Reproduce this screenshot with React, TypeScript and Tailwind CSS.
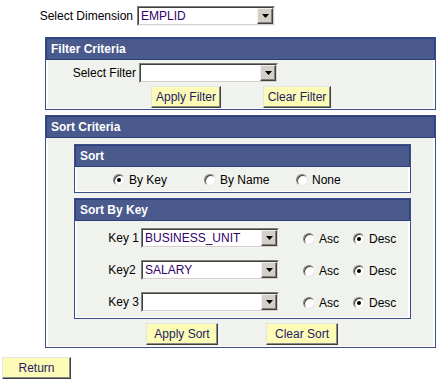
import React from 'react';

function Select({ value, w = 138 }: { value?: string; w?: number }) {
  return (
    <div
      className="h-[20px] flex border border-t-[#808080] border-l-[#808080] border-r-[#f4f4f4] border-b-[#f4f4f4]"
      style={{ width: w }}
    >
      <div className="flex-1 flex border border-t-[#404040] border-l-[#404040] border-r-[#d4d0c8] border-b-[#d4d0c8] bg-white">
        <span className="flex-1 pl-[2px] leading-[16px] text-[#33006b] overflow-hidden whitespace-nowrap">{value}</span>
        <span className="w-[16px] h-[16px] bg-[#d4d0c8] flex items-center justify-center border border-t-[#f0f0f0] border-l-[#f0f0f0] border-r-[#404040] border-b-[#404040] shadow-[inset_-1px_-1px_0_#808080]">
          <svg width="7" height="4" viewBox="0 0 7 4">
            <path d="M0 0h7L3.5 4z" fill="#000" />
          </svg>
        </span>
      </div>
    </div>
  );
}

function Button({ label, w }: { label: string; w: number }) {
  return (
    <div
      className="h-[22px] flex items-center justify-center bg-[#fcfcb6] text-[#241a66] border border-t-[#e4e4e4] border-l-[#e4e4e4] border-r-[#404040] border-b-[#404040] shadow-[inset_-1px_-1px_0_#8a8a8a]"
      style={{ width: w }}
    >
      {label}
    </div>
  );
}

function Radio({ checked, label }: { checked?: boolean; label: string }) {
  return (
    <span className="flex items-center gap-[4px]">
      <span className="w-[12px] h-[12px] rounded-full bg-white border border-t-[#808080] border-l-[#808080] border-r-[#e8e8e8] border-b-[#e8e8e8] shadow-[inset_1px_1px_0_#404040] flex items-center justify-center">
        {checked && <span className="w-[4px] h-[4px] rounded-full bg-black" />}
      </span>
      <span className="text-black">{label}</span>
    </span>
  );
}

function Panel({ title, children, className = '' }: { title: string; children: React.ReactNode; className?: string }) {
  return (
    <div className={`border border-[#3d4f88] bg-white ${className}`}>
      <div className="h-[22px] bg-[#4a5a8c] border border-[#2c3e7c] text-white font-bold pl-[4px] leading-[20px]">
        {title}
      </div>
      <div className="mx-[2px] mb-[1px] bg-[#f0f2ed]">{children}</div>
    </div>
  );
}

export default function App() {
  return (
    <div className="w-[444px] h-[385px] bg-white text-[12px] text-black font-['Liberation_Sans',Arial,sans-serif]">
      <div className="pt-[6px] flex items-end">
        <span className="w-[137px] text-right pr-[4px] pb-[1px]">Select Dimension</span>
        <Select value="EMPLID" />
      </div>

      <Panel title="Filter Criteria" className="ml-[45px] w-[391px] mt-[11px]">
        <div className="pt-[3px] flex items-end">
          <span className="w-[91px] text-right pr-[3px] pb-[1px]">Select Filter</span>
          <Select w={139} />
        </div>
        <div className="mt-[3px] flex pl-[103px] gap-[42px]">
          <Button label="Apply Filter" w={70} />
          <Button label="Clear Filter" w={68} />
        </div>
      </Panel>

      <Panel title="Sort Criteria" className="ml-[45px] w-[391px] mt-[5px]">
        <div className="pt-[6px] pl-[26px]">
          <Panel title="Sort" className="w-[337px]">
            <div className="h-[24px] flex items-center pt-[2px] pl-[36px]">
              <span className="w-[91px]"><Radio checked label="By Key" /></span>
              <span className="w-[92px]"><Radio label="By Name" /></span>
              <Radio label="None" />
            </div>
          </Panel>
          <Panel title="Sort By Key" className="w-[337px] mt-[5px]">
            <div className="pt-[7px] pb-[5px] flex flex-col gap-[12px]">
              {[
                { k: 'Key 1', v: 'BUSINESS_UNIT' },
                { k: 'Key2 ', v: 'SALARY' },
                { k: 'Key 3', v: '' },
              ].map((r) => (
                <div key={r.k} className="flex items-end">
                  <span className="w-[64px] text-right pr-[2px] pb-[1px] whitespace-pre">{r.k}</span>
                  <Select value={r.v} />
                  <span className="ml-[24px] w-[50px]"><Radio label="Asc" /></span>
                  <span><Radio checked label="Desc" /></span>
                </div>
              ))}
            </div>
          </Panel>
        </div>
        <div className="mt-[4px] pb-[1px] flex pl-[98px] gap-[48px]">
          <Button label="Apply Sort" w={72} />
          <Button label="Clear Sort" w={72} />
        </div>
      </Panel>

      <div className="mt-[9px] ml-[2px]">
        <Button label="Return" w={69} />
      </div>
    </div>
  );
}
